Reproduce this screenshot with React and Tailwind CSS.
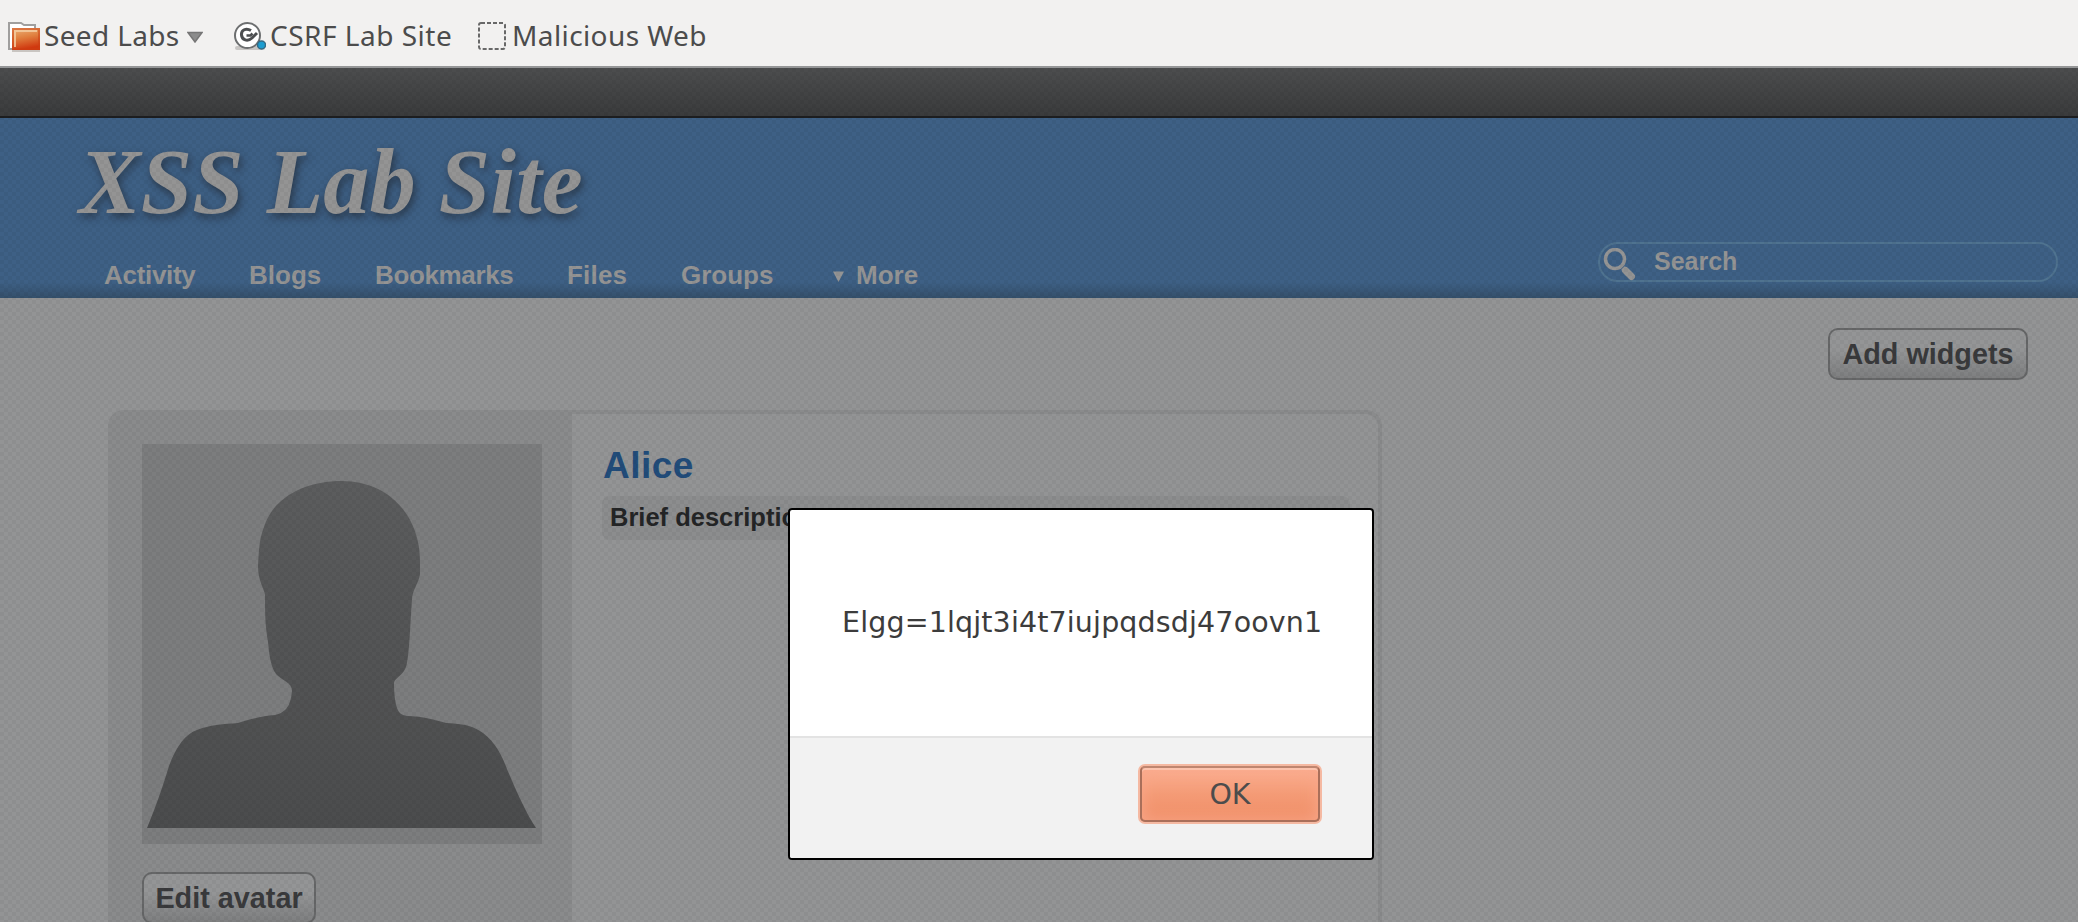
import React from "react";

const NAV = [
  ["Activity", "w-[145px] tracking-[-0.3px]"],
  ["Blogs", "w-[126px]"],
  ["Bookmarks", "w-[192px] tracking-[-0.35px]"],
  ["Files", "w-[114px] tracking-[0.2px]"],
  ["Groups", "w-[148px]"],
];

function FolderIcon() {
  return (
    <svg className="mt-[22px] h-[30px] w-[32px] shrink-0" viewBox="0 0 32 30">
      <defs>
        <linearGradient id="folder" x1="0" y1="0" x2="0.25" y2="1">
          <stop offset="0" stopColor="#ecb57c" />
          <stop offset="0.5" stopColor="#e07f3e" />
          <stop offset="1" stopColor="#d0380f" />
        </linearGradient>
      </defs>
      <path d="M1 27V1h12l3 2h11v24z" fill="#fff" stroke="#a09f9e" strokeWidth="2" />
      <path d="M4 29h28" stroke="#c9c5c1" strokeWidth="2" />
      <rect x="4" y="6" width="28" height="22" fill="url(#folder)" />
      <rect x="5" y="7" width="26" height="20" fill="none" stroke="#cc3d12" strokeOpacity="0.5" strokeWidth="2" />
      <path d="M7 25V9h22" fill="none" stroke="#f5cfa4" strokeWidth="2" strokeOpacity="0.8" />
    </svg>
  );
}

function SiteIcon() {
  return (
    <svg className="mt-[22px] ml-[31px] h-[30px] w-[32px] shrink-0" viewBox="0 0 32 30">
      <rect x="1" y="24" width="30" height="4" rx="2" fill="#c8c6c4" />
      <circle cx="13.500" cy="13.500" r="12.500" fill="#fff" stroke="#6d6f70" strokeWidth="2" />
      <path d="M17 8.500C12 5.500 7 8 7.500 13c.5 5 6 7 10.500 3l5-5" fill="none" stroke="#4c4e50" strokeWidth="3" />
      <path d="M12.500 13.500h4l2-2" fill="none" stroke="#4c4e50" strokeWidth="2.500" />
      <circle cx="27.500" cy="23" r="4" fill="#1d9dd0" stroke="#356b85" strokeWidth="1.500" />
    </svg>
  );
}

function BookmarkBar() {
  return (
    <div className="flex h-[66px] items-start bg-[#f2f1f0] pl-2 font-['Noto_Sans',sans-serif] text-[28px] leading-[70px] whitespace-nowrap text-[#4c4c4c]">
      <FolderIcon />
      <span className="ml-1 w-[136px] tracking-[0.35px]">Seed Labs</span>
      <svg className="mt-[31px] ml-[7px] h-[12px] w-4 shrink-0" viewBox="0 0 16 12">
        <path d="M1 1.500h14L8 11z" fill="#8c8c8c" stroke="#767676" strokeWidth="1.500" />
      </svg>
      <SiteIcon />
      <span className="ml-1 w-[182px] tracking-[0.5px]">CSRF Lab Site</span>
      <svg className="mt-[22px] ml-[26px] h-[28px] w-[28px] shrink-0" viewBox="0 0 28 28">
        <rect x="1" y="1" width="26" height="26" rx="2" fill="none" stroke="#686868" strokeWidth="2" strokeDasharray="4 2" />
      </svg>
      <span className="ml-[6px] tracking-[0.4px]">Malicious Web</span>
    </div>
  );
}

function Header() {
  return (
    <header className="h-[180px] bg-[#3e6085] bg-linear-to-b from-transparent from-[164px] to-[#34506b]">
      <h1 className="h-[110px] pl-[79px] font-['Liberation_Serif',serif] text-[92.500px] leading-[128px] font-bold whitespace-nowrap text-[#949494] italic [text-shadow:2px_4px_8px_#29384a]">
        XSS Lab Site
      </h1>
      <div className="flex justify-between">
        <nav className="flex pt-[31px] pl-[104px] text-[26px] leading-[32px] font-bold text-[#949494]">
          {NAV.map(([label, width]) => (
            <span key={label} className={width}>{label}</span>
          ))}
          <svg className="mt-[12px] mr-[12px] ml-[4px] h-[11px] w-[11px]" viewBox="0 0 12 12">
            <path d="M0 0.500h12L6 12z" fill="#949494" />
          </svg>
          <span>More</span>
        </nav>
        <div className="mt-[14px] mr-5 flex h-10 w-[460px] rounded-[20px] border-2 border-[#4f7390] text-[25px] leading-[35px] font-bold text-[#949494]">
          <svg className="mt-[4px] ml-[3px] h-[34px] w-[34px]" viewBox="0 0 34 34">
            <circle cx="12" cy="11" r="9.500" fill="none" stroke="#949494" strokeWidth="3.500" />
            <path d="M20 20l1.500 1.500" stroke="#949494" strokeWidth="5" />
            <path d="M22.500 22.500l6 6" stroke="#949494" strokeWidth="7" strokeLinecap="round" />
          </svg>
          <span className="ml-[17px]">Search</span>
        </div>
      </div>
    </header>
  );
}

function Avatar() {
  return (
    <svg className="h-[400px] w-[400px]" viewBox="0 0 400 400">
      <defs>
        <linearGradient id="person" x1="0" y1="0" x2="0" y2="1">
          <stop offset="0" stopColor="#5c5d5e" />
          <stop offset="1" stopColor="#4b4c4d" />
        </linearGradient>
      </defs>
      <rect width="400" height="400" fill="#7c7d7e" />
      <path
        d="M200 37C247 37 278 72 278 117V130C277 139 270 146 270 156C268 181 268 201 265 219C263 232 252 233 252 240C252 248 253 259 255 264C257 269 259 271 265 272C281 272 293 276 304 279C318 280 327 280 338 287C349 294 357 305 363 320C374 347 384 369 394 384H5C13 365 20 345 27 322C34 303 43 290 55 286C67 281 82 280 96 279C109 275 120 272 133 271C148 268 149 255 150 247C150 238 140 237 134 230C128 222 127 207 126 198C123 180 123 169 123 151C122 144 116 137 116 122C117 106 117 96 122 83C131 54 162 37 200 37Z"
        fill="url(#person)"
      />
    </svg>
  );
}

function GrayButton({ children, className }) {
  return (
    <button className={`h-[52px] shrink-0 rounded-[10px] border-2 border-[#666768] bg-linear-to-b from-[#949596] from-40% to-[#7e7f80] text-[28.800px] leading-[46px] font-bold whitespace-nowrap text-[#393a3c] ${className}`}>
      {children}
    </button>
  );
}

function Profile() {
  return (
    <section className="mt-[30px] ml-[108px] flex h-[560px] w-[1274px] overflow-hidden rounded-[16px] border-4 border-l-0 border-[#8a8b8c]">
      <div className="w-[464px] shrink-0 bg-[#8a8b8c] pt-[30px] pl-[34px]">
        <Avatar />
        <GrayButton className="mt-7 w-[174px]">Edit avatar</GrayButton>
      </div>
      <div className="grow pt-[30px] pr-[28px] pl-[30px]">
        <h2 className="pl-px text-[37px] leading-[44px] font-bold tracking-[0.5px] text-[#214c7a]">Alice</h2>
        <p className="mt-[8px] h-11 rounded-lg bg-[#8c8d8e] pl-[8px] text-[25.500px] leading-[43px] font-bold text-[#242526]">
          Brief description:
        </p>
      </div>
    </section>
  );
}

function AlertDialog() {
  return (
    <div className="absolute top-[440px] left-[788px] flex h-[352px] w-[586px] flex-col overflow-hidden rounded-[4px] border-2 border-black bg-white font-['DejaVu_Sans',sans-serif] text-[28.500px] whitespace-nowrap text-[#3c3c3c]">
      <p className="grow pt-[91px] pl-[52px] leading-[44px] tracking-[0.14px]">Elgg=1lqjt3i4t7iujpqdsdj47oovn1</p>
      <div className="flex h-[122px] shrink-0 justify-end border-t-2 border-[#e3e3e3] bg-[#f2f2f2] pt-[26px] pr-[50px]">
        <button className="h-[60px] w-[184px] rounded-[7px] border-2 border-[#f5b9a2] bg-[#f0906a]">
          <span className="block h-full rounded-[5px] border-2 border-[#a96f5a] border-t-[#bf8670] bg-linear-to-b from-[#fbae91] via-[#f49b76] to-[#f08e66] leading-[54px] text-[#4c4c4c] shadow-[inset_0_2px_0_#fcc3ad,inset_0_0_16px_#f9a88b]">
            OK
          </span>
        </button>
      </div>
    </div>
  );
}

function DotTexture() {
  return (
    <svg className="pointer-events-none absolute inset-0 h-full w-full">
      <defs>
        <pattern id="dots" width="8" height="8" patternUnits="userSpaceOnUse">
          <path d="M0 0h4v4h-4zM4 4h4v4h-4z" fill="#000" fillOpacity="0.045" />
        </pattern>
      </defs>
      <rect width="100%" height="100%" fill="url(#dots)" />
    </svg>
  );
}

export default function App() {
  return (
    <div className="h-[922px] w-[2078px] overflow-hidden bg-[#939495] font-['Liberation_Sans',Arial,sans-serif]">
      <BookmarkBar />
      <main className="relative h-[856px] overflow-hidden border-t-2 border-[#959697]">
        <div className="h-[50px] border-b-2 border-[#1d1e20] bg-linear-to-b from-[#4c4d4e] to-[#3a3b3c]" />
        <Header />
        <div className="flex justify-end pt-[30px] pr-[50px]">
          <GrayButton className="w-[200px]">Add widgets</GrayButton>
        </div>
        <Profile />
        <DotTexture />
        <AlertDialog />
      </main>
    </div>
  );
}
